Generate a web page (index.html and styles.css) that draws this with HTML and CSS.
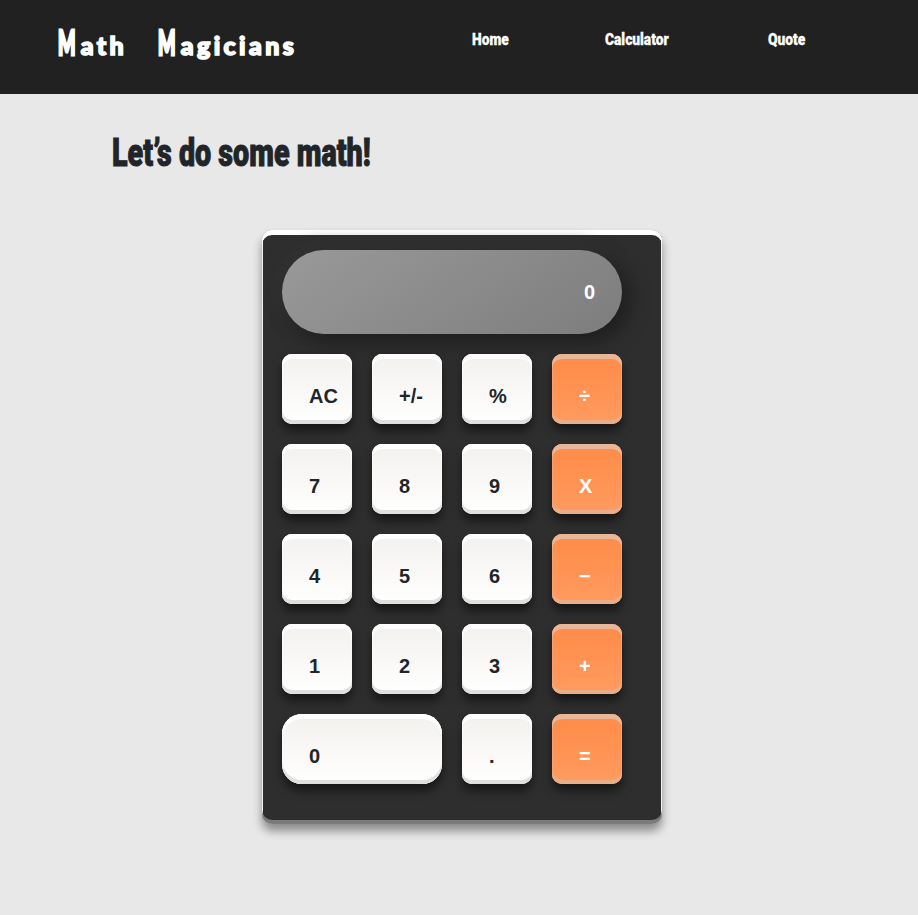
FILE: index.html
```html
<!DOCTYPE html>
<html lang="en">
<head>
<meta charset="utf-8">
<title>Math Magicians</title>
<link rel="stylesheet" href="styles.css">
</head>
<body>
<header class="header">
  <h1 class="logo"><span class="word word-math"><span class="cap">M</span>ath</span><span class="word word-magicians"><span class="cap">M</span>agicians</span></h1>
  <nav class="nav">
    <a class="link"><span>Home</span></a>
    <a class="link link-calc"><span>Calculator</span></a>
    <a class="link link-quote"><span>Quote</span></a>
  </nav>
</header>
<main class="main">
  <h2 class="title"><span>Let’s do some math!</span></h2>
  <section class="calculator">
    <div class="display">0</div>
    <div class="keys">
      <div class="key">AC</div><div class="key">+/-</div><div class="key">%</div><div class="key op">÷</div>
      <div class="key">7</div><div class="key">8</div><div class="key">9</div><div class="key op">X</div>
      <div class="key">4</div><div class="key">5</div><div class="key">6</div><div class="key op">−</div>
      <div class="key">1</div><div class="key">2</div><div class="key">3</div><div class="key op">+</div>
      <div class="key wide">0</div><div class="key">.</div><div class="key op">=</div>
    </div>
  </section>
</main>
</body>
</html>
```
FILE: styles.css
```css
* { box-sizing: border-box; }
body { margin: 0; height: 915px; background: #e8e8e8; color: #212529; font-family: "Liberation Sans", Arial, sans-serif; overflow: hidden; }
.header { display: flex; height: 94px; background: #212121; color: #fff; }
.logo { display: flex; width: 472px; margin: 0; padding: 26px 0 0 58px; font: 900 25px/32px Lato, sans-serif; letter-spacing: 3.4px; -webkit-text-stroke: 1.6px #fff; }
.word { display: block; white-space: nowrap; transform-origin: 0 50%; }
.cap { display: inline-block; font-size: 34px; line-height: 32px; transform: scaleX(.54); transform-origin: 0 50%; margin-right: -13px; -webkit-text-stroke: 3px #fff; }
.word-math { width: 100px; }
.nav { display: flex; padding-top: 27px; }
.link { width: 133px; font: 900 17px/24px Roboto, sans-serif; white-space: nowrap; }
.link-calc { width: 163px; }
.link span, .title span { display: inline-block; transform: scaleX(.81); transform-origin: 0 50%; -webkit-text-stroke: .3px currentColor; }
.title { margin: 36px 0 0 112px; height: 100px; font: 900 38px/46px Roboto, sans-serif; white-space: nowrap; }
.title span { transform: scaleX(.755); -webkit-text-stroke: 1px #212529; }
.calculator { width: 400px; height: 594px; margin-left: 262px; padding: 20px; border-radius: 10px; background: #2e2e2e;
  box-shadow: inset 0 5px 0 #fff, inset 0 -4px 0 #7d7b79, inset 0 0 0 1px #f2f2f2, 0 7px 10px rgba(0,0,0,.4); }
.display { width: 340px; height: 84px; padding: 0 27px; border-radius: 42px; text-align: right; color: #fff; font-size: 20px; font-weight: 700; line-height: 84px;
  background: linear-gradient(145deg, #999, #7d7d7d); box-shadow: 7px 7px 20px #1d1d1d, -5px -5px 16px #353535; }
.keys { display: grid; grid-template-columns: repeat(4, 70px); grid-auto-rows: 70px; gap: 20px; margin-top: 20px; }
.key { padding: 30px 0 0 27px; border-radius: 10px; font-size: 20px; font-weight: 700; line-height: 24px; white-space: nowrap;
  background: linear-gradient(#f3f1ee, #fff);
  box-shadow: inset 0 5px 0 #fff, inset 0 -4px 0 #e1e0df, inset 0 0 0 1px #fafafa, 0 7px 10px rgba(0,0,0,.5); }
.op { color: #fff; background: linear-gradient(#ff8b48, #ff9b60);
  box-shadow: inset 0 5px 0 #e8b79a, inset 0 -4px 0 #e8ad89, inset 0 0 0 1px #f4a273, 0 7px 10px rgba(0,0,0,.5); }
.wide { grid-column: span 2; border-radius: 20px; }
```
